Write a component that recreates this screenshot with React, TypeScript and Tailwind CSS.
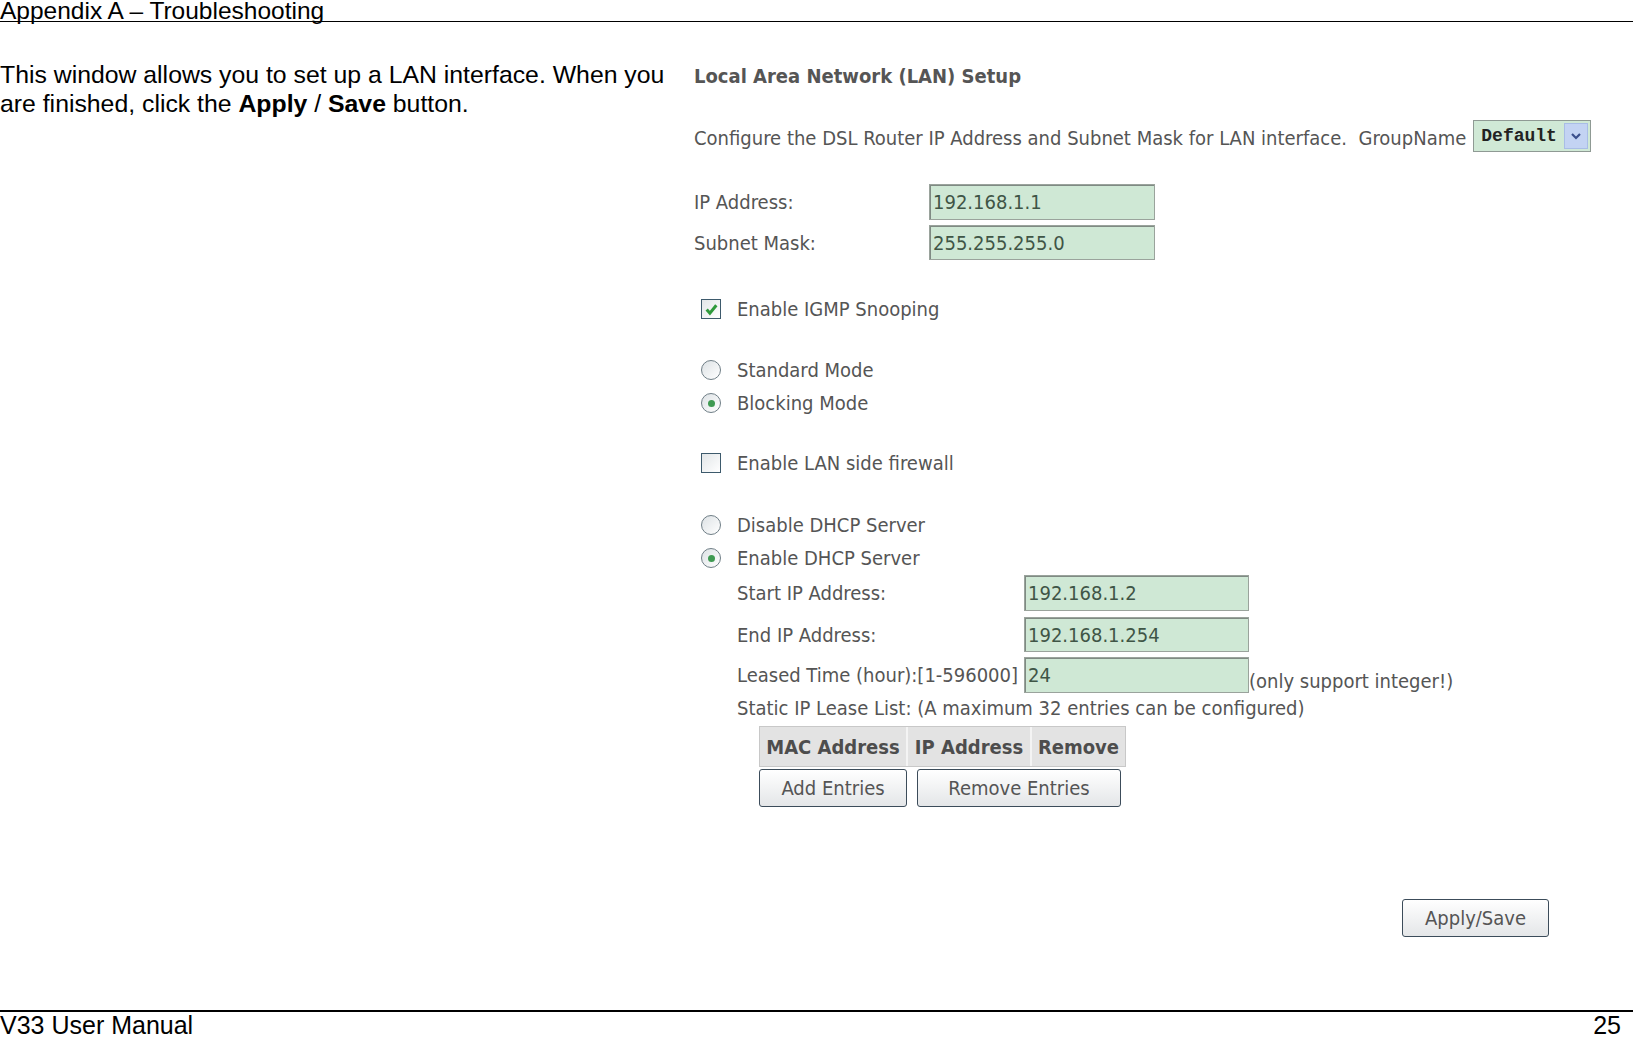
import React from "react";

const ui = "font-['DejaVu_Sans_Condensed','DejaVu_Sans',sans-serif] text-[20px] text-[#555]";

function Field({ value }: { value: string }) {
  return (
    <div className="flex h-full w-full items-center border border-[#9aa39c] bg-[#cfe8d5] pl-[3px] text-[#3f5546] shadow-[inset_1px_1px_0_#7f8a83]">
      {value}
    </div>
  );
}

function Radio({ on }: { on?: boolean }) {
  return (
    <span className="flex h-[20px] w-[20px] items-center justify-center rounded-full border-[1.5px] border-[#6f7e86] bg-gradient-to-br from-[#dde2e5] to-white">
      {on ? <span className="h-[7px] w-[7px] rounded-full bg-[#3f9a52]" /> : null}
    </span>
  );
}

function Check({ on }: { on?: boolean }) {
  return (
    <span className="flex h-[20px] w-[20px] items-center justify-center border-[1.5px] border-[#3d5a6c] bg-gradient-to-br from-[#e2e6e8] to-white">
      {on ? (
        <svg width="15" height="15" viewBox="0 0 14 14">
          <path d="M2.5 7 L5.5 10.5 L11.5 3" fill="none" stroke="#2f9a3c" strokeWidth="2.8" />
        </svg>
      ) : null}
    </span>
  );
}

function Btn({ children, w }: { children: React.ReactNode; w: string }) {
  return (
    <div className={`flex h-full items-center justify-center rounded-[3px] border-[1.5px] border-[#3c4c5a] bg-gradient-to-b from-white to-[#e4e6e8] text-[#555] ${w}`}>
      {children}
    </div>
  );
}

export default function App() {
  return (
    <div className="flex h-[1039px] w-[1633px] flex-col bg-white font-['Liberation_Sans',Arial,sans-serif] text-black">
      <div className="h-[22px] border-b border-black text-[24.5px] leading-[22px]">Appendix A – Troubleshooting</div>

      <div className="flex flex-1">
        <div className="w-[694px] shrink-0 pt-[38px] text-[24.8px] leading-[29px]">
          This window allows you to set up a LAN interface. When you
          <br />
          are finished, click the <b>Apply</b> / <b>Save</b> button.
        </div>

        <div className={`flex flex-1 flex-col ${ui}`}>
          <div className="mt-[39px] flex h-[30px] items-center font-bold text-[#555]">Local Area Network (LAN) Setup</div>

          <div className="mt-[29px] flex h-[32px] items-center">
            <span className="mt-[4px] whitespace-nowrap">Configure the DSL Router IP Address and Subnet Mask for LAN interface.&nbsp; GroupName</span>
            <div className="ml-[7px] flex h-[32px] w-[118px] items-center border border-[#8f9a94] bg-[#d0e9d6] p-[2px]">
              <span className="flex-1 pl-[5px] font-['Liberation_Mono',monospace] text-[18px] font-bold text-[#222]">Default</span>
              <span className="flex h-full w-[24px] items-center justify-center border border-[#a9bde6] bg-[#c3d3f3]">
                <svg width="12" height="10" viewBox="0 0 12 10">
                  <path d="M2 3 L6 7 L10 3" fill="none" stroke="#3a4f8c" strokeWidth="2.2" />
                </svg>
              </span>
            </div>
          </div>

          <div className="mt-[32px] flex h-[36px] items-center">
            <span className="w-[235px]">IP Address:</span>
            <div className="h-full w-[226px]"><Field value="192.168.1.1" /></div>
          </div>
          <div className="mt-[5px] flex h-[35px] items-center">
            <span className="w-[235px]">Subnet Mask:</span>
            <div className="h-full w-[226px]"><Field value="255.255.255.0" /></div>
          </div>

          <div className="mt-[37px] flex h-[24px] items-center gap-[16px] pl-[7px]">
            <Check on />
            <span>Enable IGMP Snooping</span>
          </div>

          <div className="mt-[37px] flex h-[24px] items-center gap-[16px] pl-[7px]">
            <Radio />
            <span>Standard Mode</span>
          </div>
          <div className="mt-[9px] flex h-[24px] items-center gap-[16px] pl-[7px]">
            <Radio on />
            <span>Blocking Mode</span>
          </div>

          <div className="mt-[36px] flex h-[24px] items-center gap-[16px] pl-[7px]">
            <Check />
            <span>Enable LAN side firewall</span>
          </div>

          <div className="mt-[38px] flex h-[24px] items-center gap-[16px] pl-[7px]">
            <Radio />
            <span>Disable DHCP Server</span>
          </div>
          <div className="mt-[9px] flex h-[24px] items-center gap-[16px] pl-[7px]">
            <Radio on />
            <span>Enable DHCP Server</span>
          </div>

          <div className="mt-[5px] flex h-[36px] items-center pl-[43px]">
            <span className="w-[287px]">Start IP Address:</span>
            <div className="h-full w-[225px]"><Field value="192.168.1.2" /></div>
          </div>
          <div className="mt-[6px] flex h-[35px] items-center pl-[43px]">
            <span className="w-[287px]">End IP Address:</span>
            <div className="h-full w-[225px]"><Field value="192.168.1.254" /></div>
          </div>
          <div className="mt-[5px] flex h-[36px] items-center pl-[43px]">
            <span className="w-[287px] whitespace-nowrap">Leased Time (hour):[1-596000]</span>
            <div className="h-full w-[225px] shrink-0"><Field value="24" /></div>
            <span className="mt-[12px] whitespace-nowrap">(only support integer!)</span>
          </div>
          <div className="mt-[3px] flex h-[24px] items-center whitespace-nowrap pl-[43px]">Static IP Lease List: (A maximum 32 entries can be configured)</div>

          <div className="mt-[6px] flex h-[41px] pl-[65px]">
            <div className="flex border border-[#c8c8c8] bg-[#e3e3e3] font-bold text-[#4d4d4d]">
              <span className="flex w-[148px] items-center justify-center whitespace-nowrap border-r-2 border-[#f4f4f4]">MAC Address</span>
              <span className="flex w-[124px] items-center justify-center whitespace-nowrap border-r-2 border-[#f4f4f4]">IP Address</span>
              <span className="flex w-[93px] items-center justify-center">Remove</span>
            </div>
          </div>

          <div className="mt-[2px] flex h-[38px] gap-[10px] pl-[65px]">
            <Btn w="w-[148px]">Add Entries</Btn>
            <Btn w="w-[204px]">Remove Entries</Btn>
          </div>

          <div className="mt-[92px] flex h-[38px] pl-[708px]">
            <Btn w="w-[147px]">Apply/Save</Btn>
          </div>
        </div>
      </div>

      <div className="flex h-[29px] items-center justify-between border-t-2 border-black text-[25px]">
        <span>V33 User Manual</span>
        <span className="pr-[12px]">25</span>
      </div>
    </div>
  );
}
